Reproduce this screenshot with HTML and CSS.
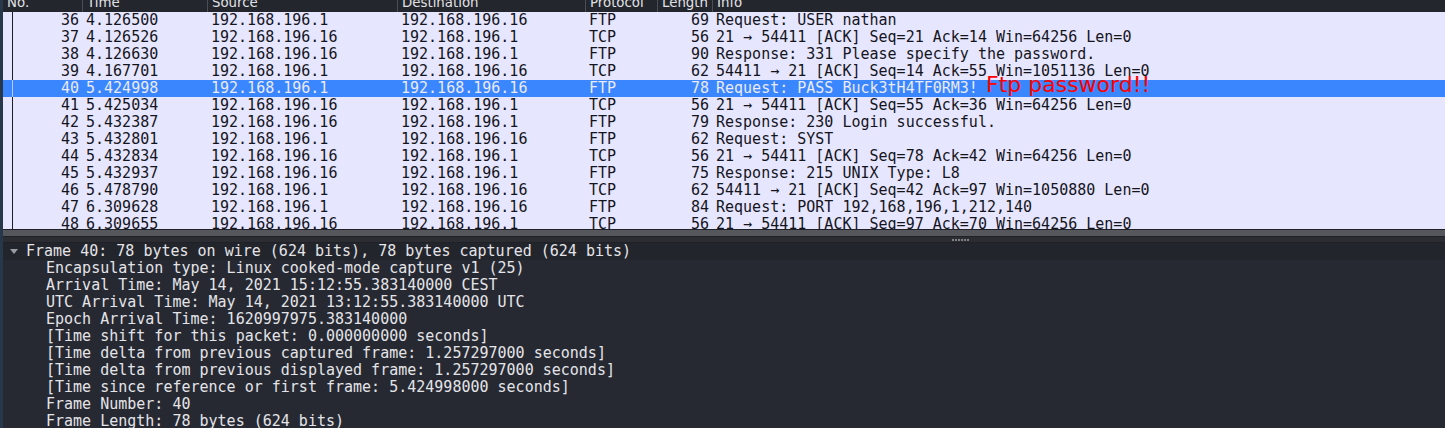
FILE: index.html
```html
<!DOCTYPE html>
<html>
<head>
<meta charset="utf-8">
<title>Wireshark</title>
<link rel="stylesheet" href="styles.css">
</head>
<body>
<div class="window">
  <div class="packet-list">
    <div class="header">
      <div class="hc c-no">No.</div>
      <div class="hc c-time">Time</div>
      <div class="hc c-src">Source</div>
      <div class="hc c-dst">Destination</div>
      <div class="hc c-proto">Protocol</div>
      <div class="hc c-len">Length</div>
      <div class="hc c-info">Info</div>
    </div>
    <div class="rows">
      <div class="row"><span class="c c-no">36</span><span class="c c-time">4.126500</span><span class="c c-src">192.168.196.1</span><span class="c c-dst">192.168.196.16</span><span class="c c-proto">FTP</span><span class="c c-len">69</span><span class="c c-info">Request: USER nathan</span></div>
      <div class="row"><span class="c c-no">37</span><span class="c c-time">4.126526</span><span class="c c-src">192.168.196.16</span><span class="c c-dst">192.168.196.1</span><span class="c c-proto">TCP</span><span class="c c-len">56</span><span class="c c-info">21 → 54411 [ACK] Seq=21 Ack=14 Win=64256 Len=0</span></div>
      <div class="row"><span class="c c-no">38</span><span class="c c-time">4.126630</span><span class="c c-src">192.168.196.16</span><span class="c c-dst">192.168.196.1</span><span class="c c-proto">FTP</span><span class="c c-len">90</span><span class="c c-info">Response: 331 Please specify the password.</span></div>
      <div class="row"><span class="c c-no">39</span><span class="c c-time">4.167701</span><span class="c c-src">192.168.196.1</span><span class="c c-dst">192.168.196.16</span><span class="c c-proto">TCP</span><span class="c c-len">62</span><span class="c c-info">54411 → 21 [ACK] Seq=14 Ack=55 Win=1051136 Len=0</span></div>
      <div class="row selected"><span class="c c-no">40</span><span class="c c-time">5.424998</span><span class="c c-src">192.168.196.1</span><span class="c c-dst">192.168.196.16</span><span class="c c-proto">FTP</span><span class="c c-len">78</span><span class="c c-info">Request: PASS Buck3tH4TF0RM3!</span><span class="annotation">Ftp password!!</span></div>
      <div class="row"><span class="c c-no">41</span><span class="c c-time">5.425034</span><span class="c c-src">192.168.196.16</span><span class="c c-dst">192.168.196.1</span><span class="c c-proto">TCP</span><span class="c c-len">56</span><span class="c c-info">21 → 54411 [ACK] Seq=55 Ack=36 Win=64256 Len=0</span></div>
      <div class="row"><span class="c c-no">42</span><span class="c c-time">5.432387</span><span class="c c-src">192.168.196.16</span><span class="c c-dst">192.168.196.1</span><span class="c c-proto">FTP</span><span class="c c-len">79</span><span class="c c-info">Response: 230 Login successful.</span></div>
      <div class="row"><span class="c c-no">43</span><span class="c c-time">5.432801</span><span class="c c-src">192.168.196.1</span><span class="c c-dst">192.168.196.16</span><span class="c c-proto">FTP</span><span class="c c-len">62</span><span class="c c-info">Request: SYST</span></div>
      <div class="row"><span class="c c-no">44</span><span class="c c-time">5.432834</span><span class="c c-src">192.168.196.16</span><span class="c c-dst">192.168.196.1</span><span class="c c-proto">TCP</span><span class="c c-len">56</span><span class="c c-info">21 → 54411 [ACK] Seq=78 Ack=42 Win=64256 Len=0</span></div>
      <div class="row"><span class="c c-no">45</span><span class="c c-time">5.432937</span><span class="c c-src">192.168.196.16</span><span class="c c-dst">192.168.196.1</span><span class="c c-proto">FTP</span><span class="c c-len">75</span><span class="c c-info">Response: 215 UNIX Type: L8</span></div>
      <div class="row"><span class="c c-no">46</span><span class="c c-time">5.478790</span><span class="c c-src">192.168.196.1</span><span class="c c-dst">192.168.196.16</span><span class="c c-proto">TCP</span><span class="c c-len">62</span><span class="c c-info">54411 → 21 [ACK] Seq=42 Ack=97 Win=1050880 Len=0</span></div>
      <div class="row"><span class="c c-no">47</span><span class="c c-time">6.309628</span><span class="c c-src">192.168.196.1</span><span class="c c-dst">192.168.196.16</span><span class="c c-proto">FTP</span><span class="c c-len">84</span><span class="c c-info">Request: PORT 192,168,196,1,212,140</span></div>
      <div class="row"><span class="c c-no">48</span><span class="c c-time">6.309655</span><span class="c c-src">192.168.196.16</span><span class="c c-dst">192.168.196.1</span><span class="c c-proto">TCP</span><span class="c c-len">56</span><span class="c c-info">21 → 54411 [ACK] Seq=97 Ack=70 Win=64256 Len=0</span></div>
    </div>
    <div class="hscroll"></div>
  </div>
  <div class="splitter">
    <svg class="grip" width="18" height="2" viewBox="0 0 18 2"><rect x="0" y="0" width="2" height="2"/><rect x="3" y="0" width="2" height="2"/><rect x="6" y="0" width="2" height="2"/><rect x="9" y="0" width="2" height="2"/><rect x="12" y="0" width="2" height="2"/><rect x="15" y="0" width="2" height="2"/></svg>
  </div>
  <div class="details">
    <div class="trow top"><svg class="caret" width="8" height="5" viewBox="0 0 8 5"><path d="M0 0 L8 0 L4 5 Z"/></svg><span>Frame 40: 78 bytes on wire (624 bits), 78 bytes captured (624 bits)</span></div>
    <div class="trow child">Encapsulation type: Linux cooked-mode capture v1 (25)</div>
    <div class="trow child">Arrival Time: May 14, 2021 15:12:55.383140000 CEST</div>
    <div class="trow child">UTC Arrival Time: May 14, 2021 13:12:55.383140000 UTC</div>
    <div class="trow child">Epoch Arrival Time: 1620997975.383140000</div>
    <div class="trow child">[Time shift for this packet: 0.000000000 seconds]</div>
    <div class="trow child">[Time delta from previous captured frame: 1.257297000 seconds]</div>
    <div class="trow child">[Time delta from previous displayed frame: 1.257297000 seconds]</div>
    <div class="trow child">[Time since reference or first frame: 5.424998000 seconds]</div>
    <div class="trow child">Frame Number: 40</div>
    <div class="trow child">Frame Length: 78 bytes (624 bits)</div>
  </div>
</div>
</body>
</html>
```
FILE: styles.css
```css
html, body {
  margin: 0;
  padding: 0;
}
body {
  width: 1445px;
  height: 428px;
  overflow: hidden;
  background: #27384a;
}
.window {
  margin-left: 3px;
  display: flex;
  flex-direction: column;
  height: 428px;
  font-family: "DejaVu Sans Mono", "Liberation Mono", monospace;
  font-size: 15px;
}
.packet-list {
  display: flex;
  flex-direction: column;
  background: #e7e6ff;
}
.header {
  display: flex;
  height: 12px;
  overflow: hidden;
  background: #23262d;
  font-family: "DejaVu Sans", "Liberation Sans", sans-serif;
  font-size: 13.33px;
  color: #e2e2e6;
}
.hc {
  align-self: flex-end;
  line-height: 16px;
  padding: 0 0 1px 4px;
  box-sizing: border-box;
  border-left: 1px solid #4a4d55;
  white-space: nowrap;
  flex: none;
}
.header .c-no {
  border-left: none;
  padding-left: 4px;
}
.c-no { width: 79px; }
.c-time { width: 125px; }
.c-src { width: 190px; }
.c-dst { width: 188px; }
.c-proto { width: 72px; }
.c-len { width: 55px; }
.c-info { flex: 1 1 auto; }
.rows {
  height: 217px;
  overflow: hidden;
  color: #14151c;
}
.row {
  position: relative;
  display: flex;
  height: 17px;
  line-height: 17px;
  white-space: nowrap;
}
.c {
  box-sizing: border-box;
  padding-left: 4px;
  flex: none;
  overflow: hidden;
}
.row .c-no {
  text-align: right;
  padding-left: 0;
  padding-right: 3px;
  background: linear-gradient(#1e1f28, #1e1f28) 9px 0 / 1px 100% no-repeat;
}
.row .c-len {
  text-align: right;
  padding-left: 0;
  padding-right: 3px;
}
.row .c-info {
  flex: 1 1 auto;
}
.row.selected {
  background: #3a86ff;
  color: #eaeaf8;
}
.row.selected .c-no {
  background: linear-gradient(#b8c8f0, #b8c8f0) 9px 0 / 1px 100% no-repeat;
}
.annotation {
  position: absolute;
  left: 983px;
  top: -8px;
  font-family: "DejaVu Sans", "Liberation Sans", sans-serif;
  font-size: 22px;
  line-height: 26px;
  color: #ff0000;
}
.hscroll {
  height: 6px;
  background: #55575c;
  border-top: 1px solid #1f2127;
  border-bottom: 1px solid #1f2127;
}
.splitter {
  height: 5px;
  background: #2b2d33;
  border-bottom: 1px solid #1f2127;
  display: flex;
  align-items: center;
  justify-content: center;
  padding-left: 474px;
}
.grip {
  display: block;
  fill: #7d8087;
}
.details {
  flex: 1;
  background: #262932;
  color: #e4e4e8;
  overflow: hidden;
}
.trow {
  height: 17px;
  line-height: 17px;
  white-space: nowrap;
  display: flex;
  align-items: center;
}
.trow.top {
  background: #23252c;
  padding-left: 7px;
}
.caret {
  fill: #9a9ca4;
  margin-right: 8px;
  flex: none;
}
.trow.child {
  padding-left: 43px;
}
```
